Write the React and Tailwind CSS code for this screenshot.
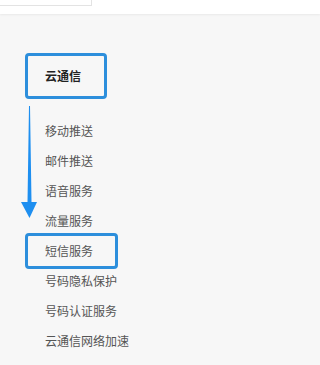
import React from "react";

const items = [
  "移动推送",
  "邮件推送",
  "语音服务",
  "流量服务",
  "短信服务",
  "号码隐私保护",
  "号码认证服务",
  "云通信网络加速",
];

const Arrow = () => (
  <svg
    className="absolute left-[16px] top-[104px]"
    width="26"
    height="118"
    viewBox="16 104 26 118"
  >
    <polygon
      points="29,106 30,106 31.5,202 37,202 29.5,218 21,202 27.5,202"
      fill="#1e8ff0"
    />
  </svg>
);

const App = () => {
  return (
    <div
      className="relative w-full min-w-[270px] h-[365px] bg-[#f7f7f7] overflow-hidden"
      style={{ fontFamily: '"Noto Sans CJK SC", "Noto Sans", sans-serif' }}
    >
      <div className="h-[14px] bg-white shadow-[0_1px_2px_rgba(0,0,0,0.06)]">
        <div className="w-[92px] h-[6px] border-b border-r border-[#e3e3e3]" />
      </div>

      <div className="pl-[25px]">
        <div className="mt-[39px] w-[82px] h-[46px] border-[3px] border-[#2d8fdc] rounded-[4px] flex items-center pl-[17px]">
          <span className="text-[12px] font-bold text-[#222]">云通信</span>
        </div>

        <ul className="mt-[17px]">
          {items.map((item) =>
            item === "短信服务" ? (
              <li
                key={item}
                className="-my-[3px] h-[36px] w-[93px] border-[3px] border-[#2d8fdc] rounded-[4px] flex items-center pl-[17px] text-[12px] text-[#555]"
              >
                {item}
              </li>
            ) : (
              <li
                key={item}
                className="h-[30px] flex items-center pl-[20px] text-[12px] text-[#555]"
              >
                {item}
              </li>
            )
          )}
        </ul>
      </div>

      <Arrow />
    </div>
  );
};

export default App;
